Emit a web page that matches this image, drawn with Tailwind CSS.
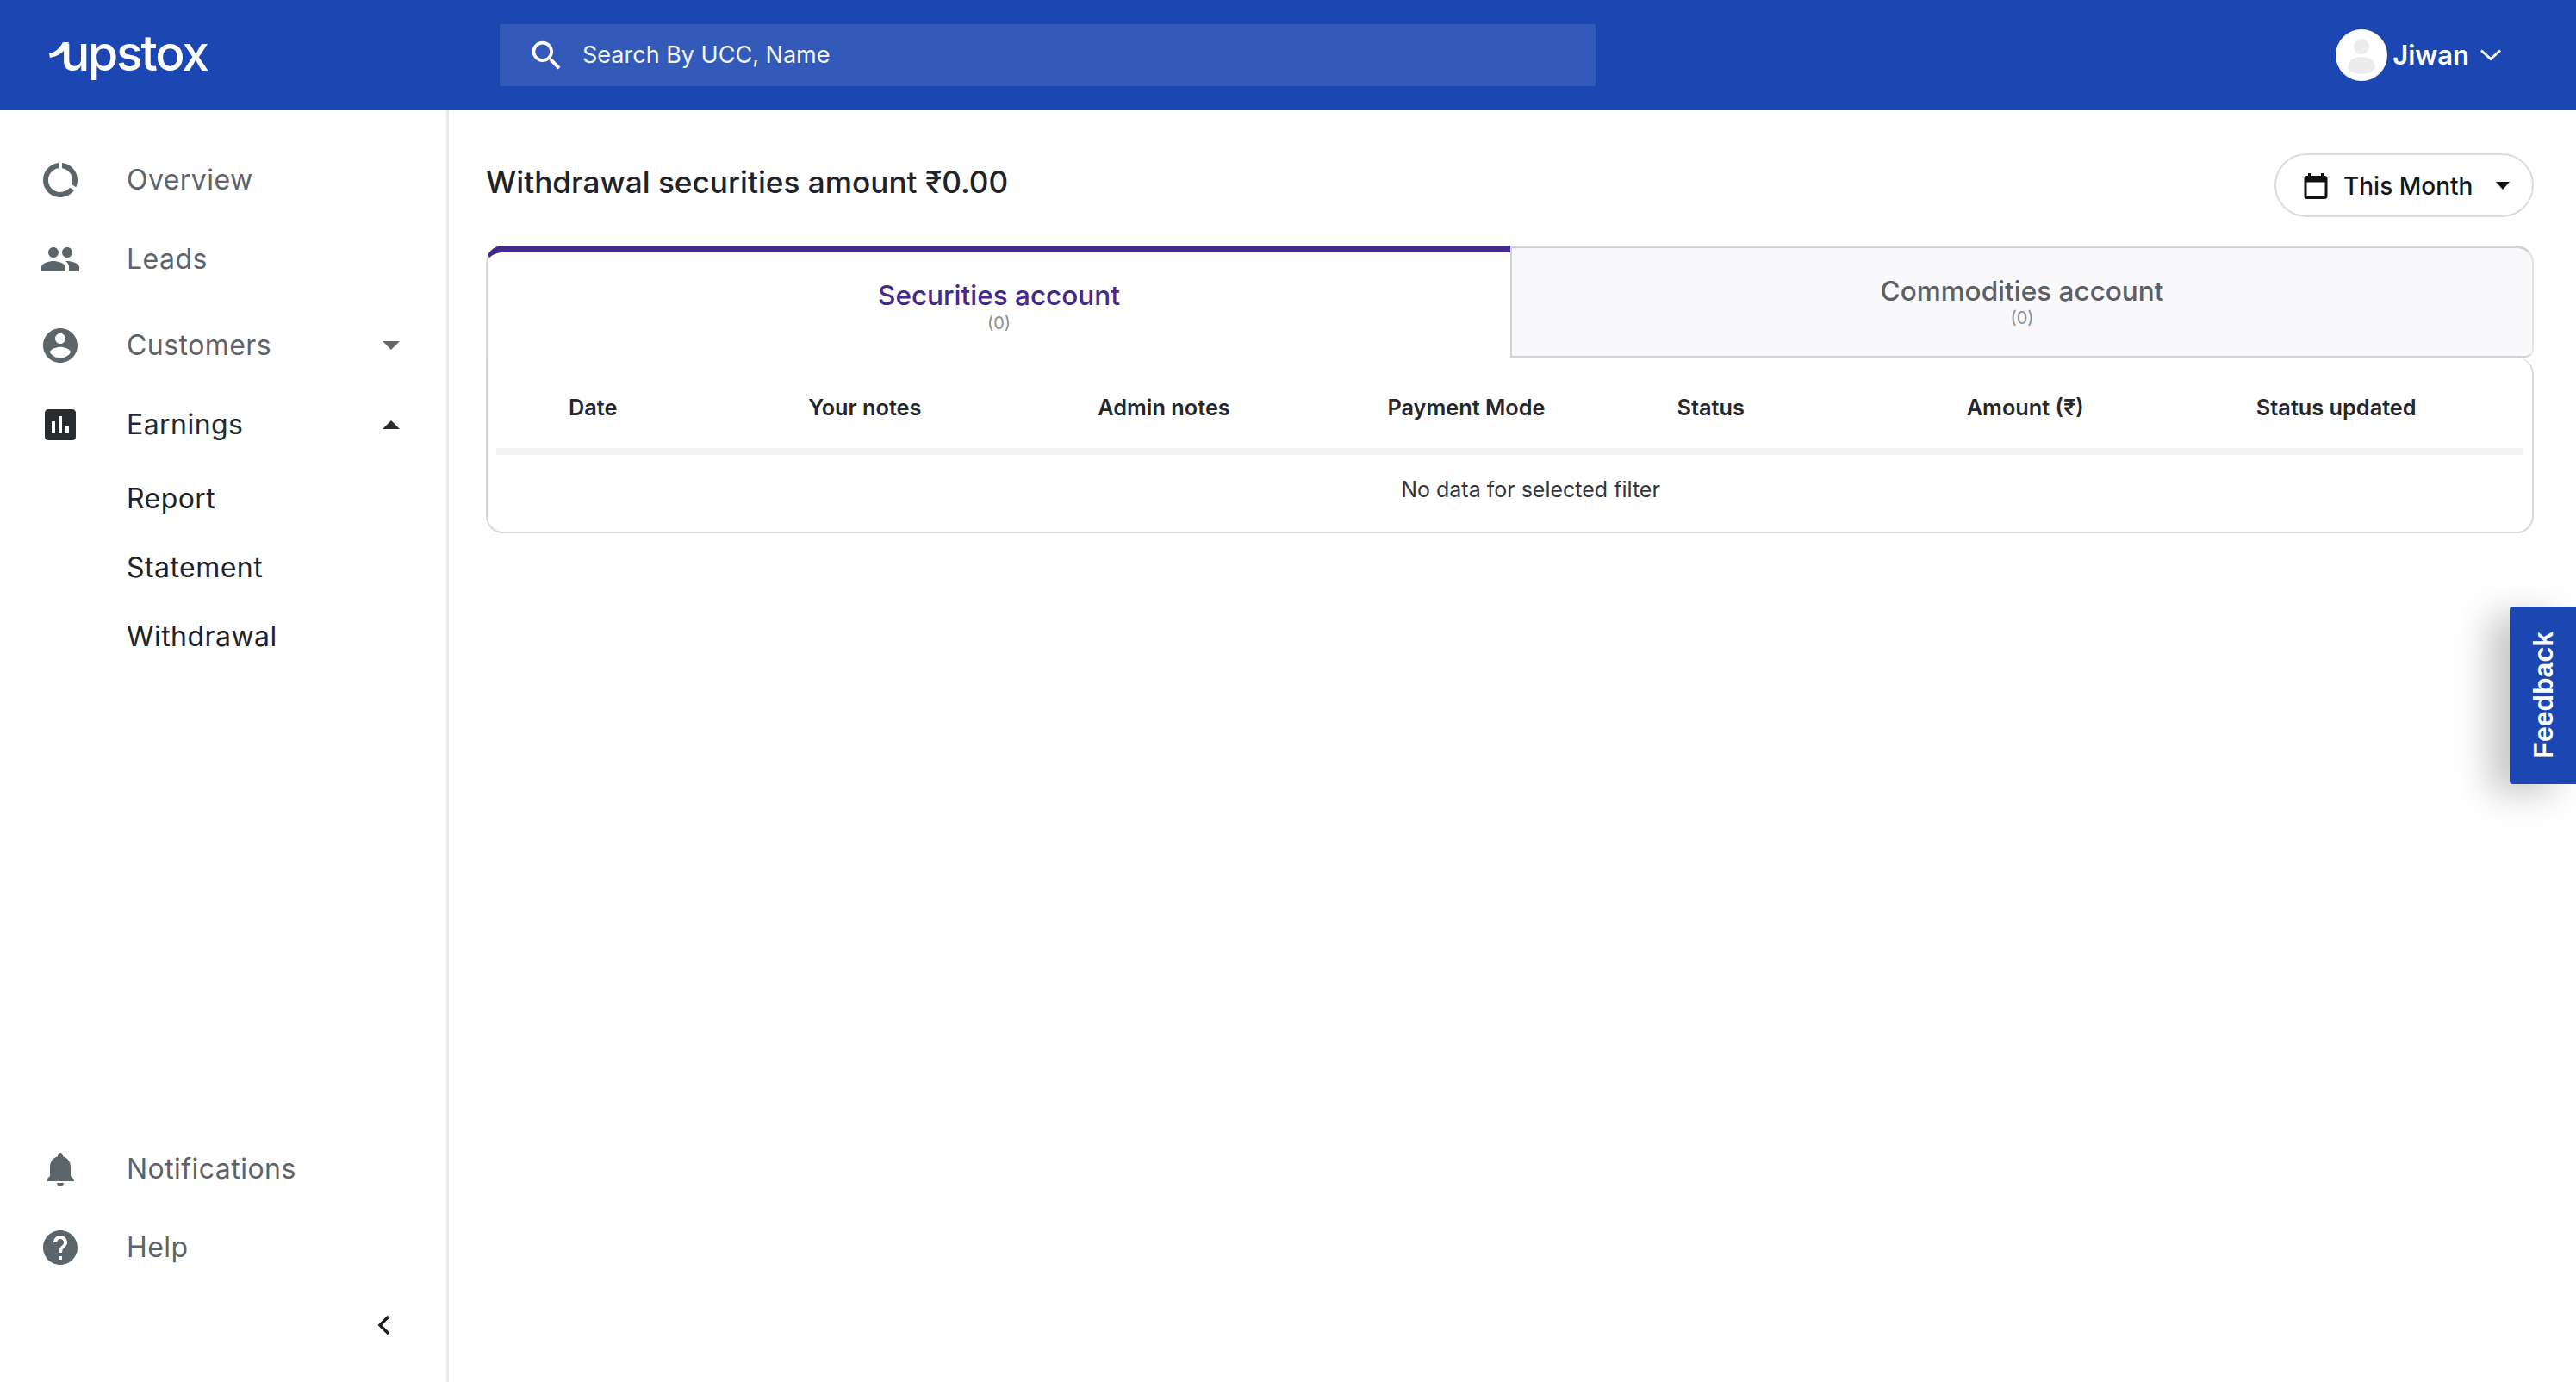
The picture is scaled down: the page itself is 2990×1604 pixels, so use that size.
<!DOCTYPE html>
<html lang="en">
<head>
  <meta charset="UTF-8">
  <title>Upstox partner - Withdrawal</title>
  <script src="https://cdn.jsdelivr.net/npm/@tailwindcss/browser@4"></script>
</head>
<body class="relative h-[1604px] w-[2990px] overflow-hidden bg-white font-['Inter',sans-serif] text-[#1f2328]">

  <!-- Header -->
  <header class="flex h-[128px] items-center bg-[#1c46b1] text-white">
    <div class="relative flex w-[580px] items-center pl-[70px]">
      <svg class="absolute left-[56px] top-[8px] h-[24px] w-[24px]" viewBox="0 0 24 24" fill="#fff"><path d="M17 2h7c-2 6-6 11-11 14-3 2-7 3-11 4L1 15c6-1 12-5 16-13z"/></svg>
      <span class="text-[57px] leading-none font-medium tracking-[-2.2px] -mt-[6px]">upstox</span>
    </div>
    <div class="flex h-[72px] w-[1272px] items-center rounded-[3px] bg-white/10 pl-[32px]">
      <svg class="mr-[19px] h-[45px] w-[45px]" viewBox="0 0 24 24" fill="#fff"><path d="M15.500 14h-.79l-.28-.27C15.410 12.590 16 11.110 16 9.500 16 5.910 13.090 3 9.500 3S3 5.910 3 9.500 5.910 16 9.500 16c1.610 0 3.090-.59 4.230-1.570l.27.28v.79l5 4.990L20.490 19l-4.990-5zm-6 0C7.010 14 5 11.990 5 9.500S7.010 5 9.500 5 14 7.010 14 9.500 11.990 14 9.500 14z"/></svg>
      <span class="text-[27px] text-[#f0f3fc]">Search By UCC, Name</span>
    </div>
    <div class="ml-auto mr-[87px] flex items-center">
      <div class="flex h-[60px] w-[60px] items-center justify-center rounded-full bg-white">
        <svg class="h-[50px] w-[50px]" viewBox="0 0 50 50" fill="#ececec"><circle cx="25" cy="15" r="9"/><path d="M9 40c0-9 7-13 16-13s16 4 16 13c-4 5-10 7-16 7S13 45 9 40z"/></svg>
      </div>
      <span class="ml-[6px] text-[31px] font-semibold">Jiwan</span>
      <svg class="ml-[13px] h-[14px] w-[24px]" viewBox="0 0 24 14" fill="none" stroke="#fff" stroke-width="3"><path d="M1 1.500l11 10 11-10"/></svg>
    </div>
  </header>

  <div class="flex h-[1476px]">
    <!-- Sidebar -->
    <aside class="flex w-[521px] shrink-0 flex-col justify-between border-r-[3px] border-[#eaeaea] pt-[35px] pb-[22px] text-[32px] tracking-[0.45px] text-[#5e6368]">
      <nav>
        <div class="flex h-[92px] items-center pl-[46px]">
          <svg class="mr-[53px] h-[48px] w-[48px]" viewBox="0 0 24 24" fill="#5c6569"><path d="M13 2.050v3.030c3.390.49 6 3.390 6 6.920 0 .9-.18 1.750-.48 2.540l2.600 1.530c.56-1.240.88-2.620.88-4.070 0-5.180-3.950-9.450-9-9.950zM12 19c-3.870 0-7-3.130-7-7 0-3.530 2.610-6.430 6-6.920V2.050c-5.060.5-9 4.760-9 9.950 0 5.520 4.470 10 9.990 10 3.310 0 6.240-1.610 8.060-4.090l-2.600-1.530C16.170 17.980 14.210 19 12 19z"/></svg>
          <span>Overview</span>
        </div>
        <div class="flex h-[92px] items-center pl-[46px]">
          <svg class="mr-[53px] h-[48px] w-[48px]" viewBox="0 0 24 24" fill="#5c6569"><path d="M16 11c1.660 0 2.990-1.340 2.990-3S17.660 5 16 5c-1.660 0-3 1.340-3 3s1.340 3 3 3zm-8 0c1.660 0 2.990-1.340 2.990-3S9.660 5 8 5C6.340 5 5 6.340 5 8s1.340 3 3 3zm0 2c-2.330 0-7 1.170-7 3.500V19h14v-2.500c0-2.330-4.670-3.500-7-3.500zm8 0c-.29 0-.62.02-.97.05 1.160.84 1.970 1.970 1.970 3.450V19h6v-2.500c0-2.330-4.670-3.500-7-3.500z"/></svg>
          <span>Leads</span>
        </div>
        <div class="mt-[8px] flex h-[92px] items-center pl-[46px]">
          <svg class="mr-[53px] h-[48px] w-[48px]" viewBox="0 0 24 24" fill="#5c6569"><path d="M12 2C6.480 2 2 6.480 2 12s4.480 10 10 10 10-4.480 10-10S17.520 2 12 2zm0 3c1.660 0 3 1.340 3 3s-1.340 3-3 3-3-1.340-3-3 1.340-3 3-3zm0 14.200c-2.500 0-4.710-1.280-6-3.220.03-1.990 4-3.080 6-3.080 1.990 0 5.970 1.090 6 3.080-1.290 1.940-3.500 3.220-6 3.220z"/></svg>
          <span>Customers</span>
          <svg class="ml-auto mr-[54px] h-[10px] w-[20px]" viewBox="0 0 20 10" fill="#66696c"><path d="M0 0h20L10 10z"/></svg>
        </div>
        <div class="flex h-[92px] items-center pl-[46px] text-[#26292c]">
          <svg class="mr-[53px] h-[48px] w-[48px]" viewBox="0 0 24 24" fill="#2a2d2f"><path d="M19 3H5c-1.100 0-2 .9-2 2v14c0 1.100.9 2 2 2h14c1.100 0 2-.9 2-2V5c0-1.100-.9-2-2-2zM9 17H7v-7h2v7zm4 0h-2V7h2v10zm4 0h-2v-4h2v4z"/></svg>
          <span>Earnings</span>
          <svg class="ml-auto mr-[54px] h-[10px] w-[20px]" viewBox="0 0 20 10" fill="#2a2d2f"><path d="M0 10h20L10 0z"/></svg>
        </div>
        <div class="flex h-[80px] items-center pl-[147px] text-[#1f2328]">Report</div>
        <div class="flex h-[80px] items-center pl-[147px] text-[#1f2328]">Statement</div>
        <div class="flex h-[80px] items-center pl-[147px] text-[#1f2328]">Withdrawal</div>
      </nav>
      <div>
        <div class="flex h-[91px] items-center pl-[46px]">
          <svg class="mr-[53px] h-[48px] w-[48px]" viewBox="0 0 24 24" fill="#5c6569"><path d="M12 22c1.100 0 2-.9 2-2h-4c0 1.100.89 2 2 2zm6-6v-5c0-3.070-1.640-5.640-4.500-6.320V4c0-.83-.67-1.500-1.500-1.500s-1.500.67-1.500 1.500v.68C7.630 5.360 6 7.920 6 11v5l-2 2v1h16v-1l-2-2z"/></svg>
          <span>Notifications</span>
        </div>
        <div class="flex h-[92px] items-center pl-[46px]">
          <svg class="mr-[53px] h-[48px] w-[48px]" viewBox="0 0 24 24" fill="#5c6569"><path d="M12 2C6.480 2 2 6.480 2 12s4.480 10 10 10 10-4.480 10-10S17.520 2 12 2zm1 17h-2v-2h2v2zm2.070-7.750l-.9.92C13.450 12.900 13 13.500 13 15h-2v-.5c0-1.100.45-2.100 1.170-2.830l1.240-1.260c.37-.36.59-.86.59-1.410 0-1.100-.9-2-2-2s-2 .9-2 2H8c0-2.210 1.790-4 4-4s4 1.790 4 4c0 .88-.36 1.680-.93 2.250z"/></svg>
          <span>Help</span>
        </div>
        <div class="flex h-[88px] items-center justify-end pr-[65px]">
          <svg class="h-[24px] w-[15px]" viewBox="0 0 15 24" fill="none" stroke="#1c1f22" stroke-width="3.500"><path d="M13 2L3 12l10 10"/></svg>
        </div>
      </div>
    </aside>

    <!-- Main -->
    <main class="flex-1 pl-[43px] pr-[49px]">
      <div class="flex h-[157px] items-start justify-between">
        <h1 class="mt-[59px] text-[35.200px] leading-[48px] font-medium">Withdrawal securities amount ₹0.00</h1>
        <button class="mt-[50px] flex h-[74px] w-[301px] items-center rounded-full border-2 border-[#dcdcdc] pl-[28px] pt-[1px] text-[28px] font-medium text-[#14171a]">
          <svg class="mr-[14px] h-[36px] w-[36px]" viewBox="0 0 24 24" fill="#111"><path d="M19 4h-1V2h-2v2H8V2H6v2H5c-1.110 0-2 .9-2 2v14c0 1.100.89 2 2 2h14c1.100 0 2-.9 2-2V6c0-1.100-.9-2-2-2zm0 16H5V9h14v11z"/></svg>
          <span>This Month</span>
          <svg class="ml-[27px] h-[9px] w-[16px]" viewBox="0 0 16 9" fill="#111"><path d="M0 0h16L8 9z"/></svg>
        </button>
      </div>

      <!-- Tabs -->
      <div class="flex h-[130px]">
        <div class="flex w-[1189px] flex-col items-center rounded-tl-[20px] border-t-[8px] border-l-2 border-t-[#44288f] border-l-[#dcdcdc] pt-[30px]">
          <span class="text-[31.500px] leading-[40px] font-medium text-[#44288f]">Securities account</span>
          <span class="text-[20px] leading-[24px] text-[#8a8d90]">(0)</span>
        </div>
        <div class="flex flex-1 flex-col items-center rounded-tr-[20px] rounded-br-[10px] border-[2px] border-t-[3px] border-[#d2d2d2] border-r-[#e4e4e4] bg-[#f9f9fb] pt-[30px]">
          <span class="text-[31.500px] leading-[40px] font-medium text-[#5c6064]">Commodities account</span>
          <span class="text-[20px] leading-[22px] text-[#8a8d90]">(0)</span>
        </div>
      </div>

      <!-- Table -->
      <div class="h-[204px] rounded-b-[20px] rounded-tr-[20px] border-2 border-t-0 border-[#d8d8d8] px-[10px]">
        <div class="grid h-[113px] grid-cols-7 items-center border-b-[8px] border-[#f4f4f4] pt-[10px] text-[25.300px] font-semibold text-[#24282c]">
          <div class="pl-[84px]">Date</div>
          <div class="pl-[26px]">Your notes</div>
          <div class="pl-[26px]">Admin notes</div>
          <div class="pl-[26px]">Payment Mode</div>
          <div class="pl-[26px]">Status</div>
          <div class="pl-[26px]">Amount (₹)</div>
          <div class="pl-[26px]">Status updated</div>
        </div>
        <p class="pt-[22px] pl-[48px] text-center text-[25px] leading-[36px] text-[#33373b]">No data for selected filter</p>
      </div>
    </main>
  </div>

  <!-- Feedback tab -->
  <button class="absolute top-[704px] right-0 flex h-[206px] w-[77px] items-center justify-center rounded-l-[4px] bg-[#1c46b1] font-['Liberation_Sans',sans-serif] text-[32px] font-bold text-white shadow-[-24px_10px_40px_rgba(0,0,0,0.22)]">
    <span class="[writing-mode:vertical-rl] rotate-180">Feedback</span>
  </button>
</body>
</html>
